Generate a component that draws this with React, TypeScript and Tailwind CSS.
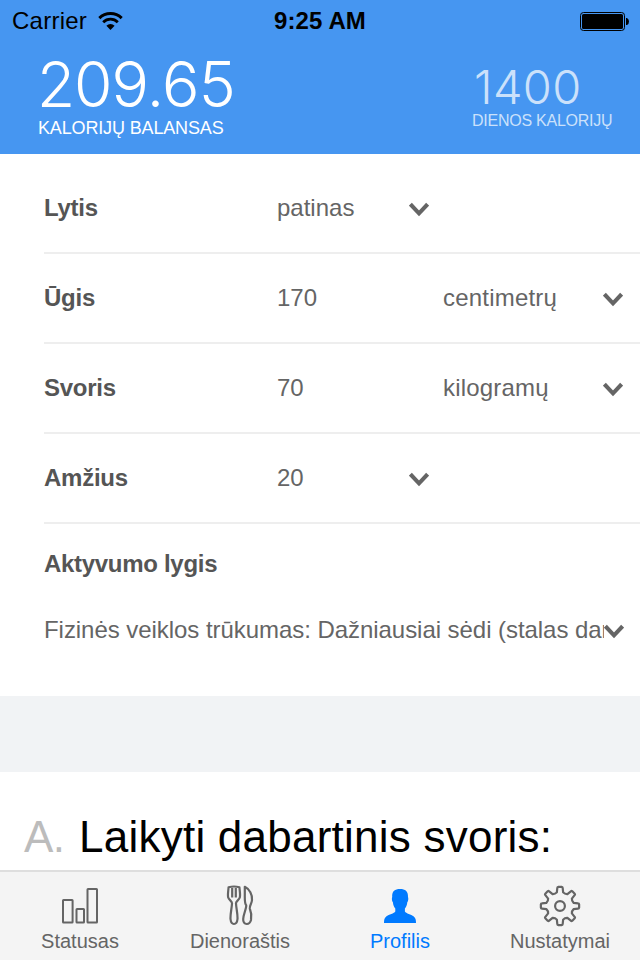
import type { ReactNode } from "react";

const SANS = "font-['Liberation_Sans',Arial,sans-serif]";

function Chevron({ className = "" }: { className?: string }) {
  return (
    <svg width="20" height="15" viewBox="0 0 20 15" fill="none" className={`shrink-0 ${className}`}>
      <path d="M1.4 2.2 10 11.4 18.6 2.2" stroke="#656565" strokeWidth="4" />
    </svg>
  );
}

function WifiIcon() {
  return (
    <svg width="25" height="19" viewBox="0 0 25 19" fill="none">
      <path d="M1.3 6.1a16.2 16.2 0 0 1 22.4 0" stroke="#000" strokeWidth="3" />
      <path d="M5.2 10.2a10.4 10.4 0 0 1 14.6 0" stroke="#000" strokeWidth="2.8" />
      <path d="M12.5 18 8.4 13.7a5.9 5.9 0 0 1 8.2 0Z" fill="#000" />
    </svg>
  );
}

function BatteryIcon() {
  return (
    <svg width="50" height="19" viewBox="0 0 50 19">
      <rect x="0.5" y="0.5" width="44" height="18" rx="3" fill="none" stroke="#000" />
      <rect x="2" y="2" width="41" height="15" rx="1.6" fill="#000" />
      <path d="M46 6h1q2 1 2 3.5T47 13h-1Z" fill="#000" />
    </svg>
  );
}

function BarsIcon() {
  return (
    <svg width="44" height="42" viewBox="0 0 44 42" fill="none" stroke="#656565" strokeWidth="2">
      <rect x="5" y="15" width="9.6" height="22.5" rx="0.5" />
      <rect x="18.5" y="24" width="7.5" height="13.5" rx="0.5" />
      <rect x="29.5" y="4" width="9.5" height="33.5" rx="0.5" />
    </svg>
  );
}

function CutleryIcon() {
  return (
    <svg width="44" height="42" viewBox="0 0 44 42" fill="none" stroke="#656565" strokeWidth="2.2" strokeLinejoin="round">
      <path d="M10.6 2.2Q16 .8 21.4 2.2C21.8 7 22.5 10 21.8 12.5C21 15.2 17.8 16 18 18.5C18.2 23 19.8 29 19.5 34C19.2 37 18 39 16 39C14 39 12.8 37 12.5 34C12.2 29 13.8 23 14 18.5C14.2 16 11 15.2 10.2 12.5C9.5 10 10.2 7 10.6 2.2Z" />
      <path d="M14.2 3v9.4M17.8 3v9.4" />
      <path d="M26.8 1.8C31.5 4 34.5 10 34 15C33.8 18.5 31.4 20.5 31.8 23.5C33.2 27 33.8 31 33 35C32.2 37.8 30.8 39 28.8 39C26.4 39 25 37.2 25.2 34C25.4 29 28.6 23.5 28.2 20.2C26.5 18.5 26.8 14 26.8 10Z" />
    </svg>
  );
}

function PersonIcon() {
  return (
    <svg width="44" height="42" viewBox="0 0 44 42" fill="#007aff">
      <path d="M22 4C27.3 4 30.2 6.3 30 12C30.6 13 30.3 16.5 29.3 17.2C29 20 28.3 21.8 26.9 23.5V26.6C28 28.6 33 29.4 35.8 31.6C37.5 33 38 35 38 38H6C6 35 6.5 33 8.2 31.6C11 29.4 16.2 28.6 17.3 26.6V23.5C15.9 21.8 15.2 20 14.9 17.2C13.9 16.5 13.6 13 14.2 12C13.8 6 17 4 22 4Z" />
    </svg>
  );
}

function gearOutline() {
  const points: string[] = [];
  const at = (r: number, deg: number) => {
    const a = ((deg - 90) * Math.PI) / 180;
    return `${(22 + r * Math.cos(a)).toFixed(2)} ${(21 + r * Math.sin(a)).toFixed(2)}`;
  };
  for (let i = 0; i < 8; i++) {
    const c = i * 45;
    points.push(`${i ? "L" : "M"}${at(14, c - 13)}L${at(18.2, c - 8.5)}Q${at(19.2, c - 8)} ${at(19.2, c - 5)}`);
    points.push(`L${at(19.2, c + 5)}Q${at(19.2, c + 8)} ${at(18.2, c + 8.5)}L${at(14, c + 13)}Q${at(12.7, c + 22.5)} ${at(14, c + 32)}`);
  }
  return points.join("") + "Z";
}

function GearIcon() {
  return (
    <svg width="44" height="42" viewBox="0 0 44 42" fill="none" stroke="#656565" strokeWidth="2.2" strokeLinejoin="round">
      <path d={gearOutline()} />
      <circle cx="22" cy="21" r="4.9" />
    </svg>
  );
}

type RowProps = { label: string; value: string; unit?: string; first?: boolean };

function Row({ label, value, unit, first }: RowProps) {
  return (
    <div className={`ml-11 flex items-center border-b-2 border-[#eeeeee] ${first ? "h-[100px] pt-[9px]" : "h-[90px]"}`}>
      <span className="w-[233px] font-bold tracking-[-0.25px] text-[#555555]">{label}</span>
      <span className={unit ? "w-[166px]" : "w-[132px]"}>{value}</span>
      {unit && <span className="w-[160px] tracking-[0.2px]">{unit}</span>}
      <Chevron className={first ? "mt-[4px]" : "mt-[3px]"} />
    </div>
  );
}

function Tab({ icon, label, active }: { icon: ReactNode; label: string; active?: boolean }) {
  return (
    <div className={`flex w-40 flex-col items-center pt-[13px] text-[20px] leading-[24px] ${active ? "text-[#007aff]" : "text-[#656565]"}`}>
      {icon}
      <span className="mt-[2px]">{label}</span>
    </div>
  );
}

export default function App() {
  return (
    <div className={`flex h-[960px] w-[640px] flex-col overflow-hidden bg-white text-[24px] leading-[30px] whitespace-nowrap text-[#656565] ${SANS}`}>
      <header className="h-[154px] shrink-0 bg-[#4696f1]">
        <div className="grid h-[42px] grid-cols-3 items-center pr-[10px] pl-3 text-black">
          <div className="flex items-center gap-[11px]">
            <span className="tracking-[0.25px]">Carrier</span>
            <WifiIcon />
          </div>
          <span className="pr-[2px] text-center font-bold tracking-[0.1px]">9:25 AM</span>
          <div className="flex justify-end">
            <BatteryIcon />
          </div>
        </div>
        <div className="flex justify-between pr-[28px] pl-[38px] text-white">
          <div>
            <div className="mt-[9px] -ml-[2px] h-[67px] font-['Inter'] text-[62.5px] leading-[66px] font-[270] tracking-[-3.4px] tabular-nums">209.65</div>
            <div className="text-[18px] leading-[20px] tracking-[-0.15px]">KALORIJŲ BALANSAS</div>
          </div>
          <div className="w-[140px] text-[#cbe1fb]">
            <div className="mt-[18px] ml-[2px] h-[51px] font-['Inter'] text-[47px] leading-[54px] font-[260] tracking-[0.4px]">1400</div>
            <div className="text-[16px] leading-[20px] tracking-[-0.25px]">DIENOS KALORIJŲ</div>
          </div>
        </div>
      </header>

      <main className="h-[716px] overflow-hidden">
        <Row label="Lytis" value="patinas" first />
        <Row label="Ūgis" value="170" unit="centimetrų" />
        <Row label="Svoris" value="70" unit="kilogramų" />
        <Row label="Amžius" value="20" />
        <section className="h-[172px] pl-11">
          <div className="pt-[25px] font-bold tracking-[-0.3px] text-[#555555]">Aktyvumo lygis</div>
          <div className="mt-9 flex items-center">
            <span className="w-[560px] overflow-hidden tracking-[-0.05px]">Fizinės veiklos trūkumas: Dažniausiai sėdi (stalas darbas)</span>
            <Chevron className="mt-[3px]" />
          </div>
        </section>
        <div className="h-[76px] bg-[#f1f3f5]" />
        <section className="flex pt-[40px] pl-6 text-[44px] leading-[50px] text-black">
          <span className="w-[55px] tracking-[-0.5px] text-[#bcbcbc]">A.</span>
          <span className="tracking-[0.24px]">Laikyti dabartinis svoris:</span>
        </section>
      </main>

      <nav className="flex h-[90px] shrink-0 border-t-2 border-[#dedede] bg-[#f4f4f4]">
        <Tab icon={<BarsIcon />} label="Statusas" />
        <Tab icon={<CutleryIcon />} label="Dienoraštis" />
        <Tab icon={<PersonIcon />} label="Profilis" active />
        <Tab icon={<GearIcon />} label="Nustatymai" />
      </nav>
    </div>
  );
}
